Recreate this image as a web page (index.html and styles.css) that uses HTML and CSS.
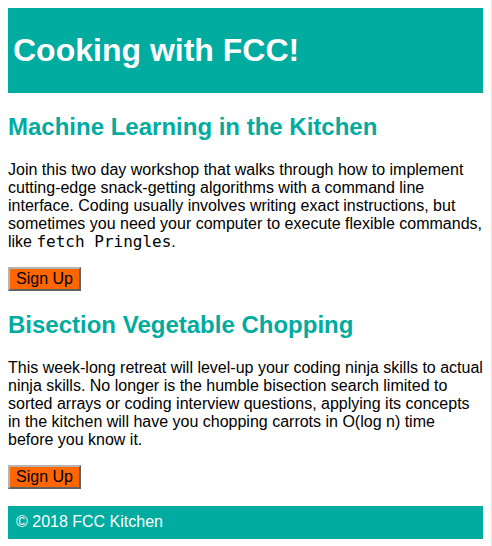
FILE: index.html
```html
<!DOCTYPE html>
<html>
<head>
<meta charset="utf-8">
<title>Cooking with FCC</title>
<link rel="stylesheet" href="styles.css">
</head>
<body>
<header class="site-header">
  <h1 class="site-title">Cooking with FCC!</h1>
</header>
<main>
  <article class="event">
    <h2 class="event-title">Machine Learning in the Kitchen</h2>
    <p class="event-text">Join this two day workshop that walks through how to implement cutting-edge snack-getting algorithms with a command line interface. Coding usually involves writing exact instructions, but sometimes you need your computer to execute flexible commands, like <code>fetch Pringles</code>.</p>
    <button class="signup">Sign Up</button>
  </article>
  <article class="event">
    <h2 class="event-title">Bisection Vegetable Chopping</h2>
    <p class="event-text">This week-long retreat will level-up your coding ninja skills to actual ninja skills. No longer is the humble bisection search limited to sorted arrays or coding interview questions, applying its concepts in the kitchen will have you chopping carrots in O(log n) time before you know it.</p>
    <button class="signup">Sign Up</button>
  </article>
</main>
<footer class="site-footer">&copy; 2018 FCC Kitchen</footer>
</body>
</html>
```

FILE: styles.css
```css
html {
  border-right: 1px solid #e6e6e6;
  background: #fff;
}
body {
  margin: 8px;
  font-family: "Liberation Sans", Arial, sans-serif;
  font-size: 16px;
  color: #000;
}
.site-header {
  background-color: #00ab9f;
  padding: 24px 5px;
}
.site-title {
  margin: 0;
  color: #fff;
  font-size: 32px;
  font-weight: bold;
}
.event-title {
  color: #00ab9f;
  font-size: 24px;
  margin: 20px 0;
}
.event-text {
  margin: 20px 0 16px;
}
code {
  font-family: "DejaVu Sans Mono", monospace;
  font-size: 16px;
  line-height: 1;
}
.signup {
  font-family: "Liberation Sans", Arial, sans-serif;
  font-size: 16px;
  background-color: #ff6600;
  color: #000;
  border: 2px outset #b4b4b4;
  padding: 1px 6px;
  margin: 0;
}
.site-footer {
  margin-top: 17px;
  background-color: #00ab9f;
  color: #fff;
  padding: 7px 8px 8px;
}
```
